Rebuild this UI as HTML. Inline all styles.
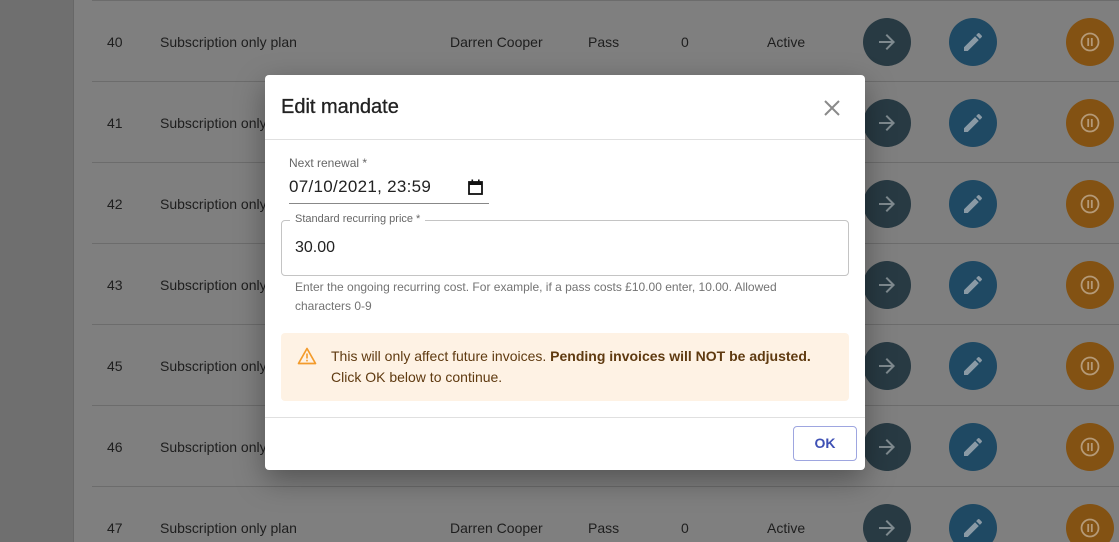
<!DOCTYPE html>
<html><head><meta charset="utf-8"><style>
*{margin:0;padding:0;box-sizing:border-box}
html,body{width:1119px;height:542px;overflow:hidden;background:#7f7f7f}
body{font-family:"Liberation Sans",sans-serif;position:relative}
.side{position:absolute;left:0;top:0;width:74px;height:542px;background:#6f6f6f;border-right:1px solid #676767}
.row{position:absolute;left:92px;right:0;height:81px;border-top:1px solid #6c6c6c;font-size:14px;color:#1e1e1e}
.row span{position:absolute;top:32px;line-height:18px}
.c{position:absolute;top:17px;width:48px;height:48px;border-radius:50%}
.c svg{position:absolute;left:12px;top:12px}
.a{left:771px;background:#283a43}
.e{left:857px;background:#1f4963}
.p{left:974px;background:#835213}
.modal{position:absolute;left:265px;top:75px;width:600px;height:395px;background:#fff;border-radius:4px;box-shadow:0 10px 30px rgba(0,0,0,.35)}
</style></head><body>
<div class="side"></div>

<div class="row" style="top:0"><span style="left:15px">40</span><span style="left:68px">Subscription only plan</span><span style="left:358px">Darren Cooper</span><span style="left:496px">Pass</span><span style="left:589px">0</span><span style="left:675px">Active</span>
<div class="c a"><svg width="24" height="24" viewBox="0 0 24 24"><path d="M12 4l-1.41 1.41L16.17 11H4v2h12.17l-5.58 5.59L12 20l8-8z" fill="#7f8a8f"/></svg></div>
<div class="c e"><svg width="24" height="24" viewBox="0 0 24 24"><path d="M3 17.25V21h3.75L17.81 9.94l-3.75-3.75L3 17.25zM20.71 7.04a1 1 0 000-1.41l-2.34-2.34a1 1 0 00-1.41 0l-1.83 1.83 3.750 3.75 1.83-1.83z" fill="#8a9aa5"/></svg></div>
<div class="c p"><svg width="24" height="24" viewBox="0 0 24 24"><circle cx="12" cy="12" r="8.5" fill="none" stroke="#b59a78" stroke-width="1.8"/><rect x="9.3" y="8" width="1.8" height="8" fill="#b59a78"/><rect x="12.9" y="8" width="1.8" height="8" fill="#b59a78"/></svg></div></div>

<div class="row" style="top:81px"><span style="left:15px">41</span><span style="left:68px">Subscription only plan</span>
<div class="c a"><svg width="24" height="24" viewBox="0 0 24 24"><path d="M12 4l-1.41 1.41L16.17 11H4v2h12.17l-5.58 5.59L12 20l8-8z" fill="#7f8a8f"/></svg></div>
<div class="c e"><svg width="24" height="24" viewBox="0 0 24 24"><path d="M3 17.25V21h3.75L17.81 9.94l-3.75-3.75L3 17.25zM20.71 7.04a1 1 0 000-1.41l-2.34-2.34a1 1 0 00-1.41 0l-1.83 1.83 3.75 3.75 1.83-1.83z" fill="#8a9aa5"/></svg></div>
<div class="c p"><svg width="24" height="24" viewBox="0 0 24 24"><circle cx="12" cy="12" r="8.5" fill="none" stroke="#b59a78" stroke-width="1.8"/><rect x="9.3" y="8" width="1.8" height="8" fill="#b59a78"/><rect x="12.9" y="8" width="1.8" height="8" fill="#b59a78"/></svg></div></div>

<div class="row" style="top:162px"><span style="left:15px">42</span><span style="left:68px">Subscription only plan</span>
<div class="c a"><svg width="24" height="24" viewBox="0 0 24 24"><path d="M12 4l-1.41 1.41L16.17 11H4v2h12.17l-5.58 5.59L12 20l8-8z" fill="#7f8a8f"/></svg></div>
<div class="c e"><svg width="24" height="24" viewBox="0 0 24 24"><path d="M3 17.25V21h3.75L17.81 9.94l-3.75-3.75L3 17.25zM20.71 7.04a1 1 0 000-1.41l-2.34-2.34a1 1 0 00-1.41 0l-1.83 1.83 3.75 3.75 1.83-1.83z" fill="#8a9aa5"/></svg></div>
<div class="c p"><svg width="24" height="24" viewBox="0 0 24 24"><circle cx="12" cy="12" r="8.5" fill="none" stroke="#b59a78" stroke-width="1.8"/><rect x="9.3" y="8" width="1.8" height="8" fill="#b59a78"/><rect x="12.9" y="8" width="1.8" height="8" fill="#b59a78"/></svg></div></div>

<div class="row" style="top:243px"><span style="left:15px">43</span><span style="left:68px">Subscription only plan</span>
<div class="c a"><svg width="24" height="24" viewBox="0 0 24 24"><path d="M12 4l-1.41 1.41L16.17 11H4v2h12.17l-5.58 5.59L12 20l8-8z" fill="#7f8a8f"/></svg></div>
<div class="c e"><svg width="24" height="24" viewBox="0 0 24 24"><path d="M3 17.25V21h3.75L17.81 9.94l-3.75-3.75L3 17.25zM20.71 7.04a1 1 0 000-1.41l-2.34-2.34a1 1 0 00-1.41 0l-1.83 1.83 3.75 3.75 1.83-1.83z" fill="#8a9aa5"/></svg></div>
<div class="c p"><svg width="24" height="24" viewBox="0 0 24 24"><circle cx="12" cy="12" r="8.5" fill="none" stroke="#b59a78" stroke-width="1.8"/><rect x="9.3" y="8" width="1.8" height="8" fill="#b59a78"/><rect x="12.9" y="8" width="1.8" height="8" fill="#b59a78"/></svg></div></div>

<div class="row" style="top:324px"><span style="left:15px">45</span><span style="left:68px">Subscription only plan</span>
<div class="c a"><svg width="24" height="24" viewBox="0 0 24 24"><path d="M12 4l-1.41 1.41L16.17 11H4v2h12.17l-5.58 5.59L12 20l8-8z" fill="#7f8a8f"/></svg></div>
<div class="c e"><svg width="24" height="24" viewBox="0 0 24 24"><path d="M3 17.25V21h3.75L17.81 9.94l-3.75-3.75L3 17.25zM20.71 7.04a1 1 0 000-1.41l-2.34-2.34a1 1 0 00-1.41 0l-1.83 1.83 3.75 3.75 1.83-1.83z" fill="#8a9aa5"/></svg></div>
<div class="c p"><svg width="24" height="24" viewBox="0 0 24 24"><circle cx="12" cy="12" r="8.5" fill="none" stroke="#b59a78" stroke-width="1.8"/><rect x="9.3" y="8" width="1.8" height="8" fill="#b59a78"/><rect x="12.9" y="8" width="1.8" height="8" fill="#b59a78"/></svg></div></div>

<div class="row" style="top:405px"><span style="left:15px">46</span><span style="left:68px">Subscription only plan</span>
<div class="c a"><svg width="24" height="24" viewBox="0 0 24 24"><path d="M12 4l-1.41 1.41L16.17 11H4v2h12.17l-5.58 5.59L12 20l8-8z" fill="#7f8a8f"/></svg></div>
<div class="c e"><svg width="24" height="24" viewBox="0 0 24 24"><path d="M3 17.25V21h3.75L17.81 9.94l-3.75-3.75L3 17.25zM20.71 7.04a1 1 0 000-1.41l-2.34-2.34a1 1 0 00-1.41 0l-1.83 1.83 3.75 3.75 1.83-1.83z" fill="#8a9aa5"/></svg></div>
<div class="c p"><svg width="24" height="24" viewBox="0 0 24 24"><circle cx="12" cy="12" r="8.5" fill="none" stroke="#b59a78" stroke-width="1.8"/><rect x="9.3" y="8" width="1.8" height="8" fill="#b59a78"/><rect x="12.9" y="8" width="1.8" height="8" fill="#b59a78"/></svg></div></div>

<div class="row" style="top:486px"><span style="left:15px">47</span><span style="left:68px">Subscription only plan</span><span style="left:358px">Darren Cooper</span><span style="left:496px">Pass</span><span style="left:589px">0</span><span style="left:675px">Active</span>
<div class="c a"><svg width="24" height="24" viewBox="0 0 24 24"><path d="M12 4l-1.41 1.41L16.17 11H4v2h12.17l-5.58 5.59L12 20l8-8z" fill="#7f8a8f"/></svg></div>
<div class="c e"><svg width="24" height="24" viewBox="0 0 24 24"><path d="M3 17.25V21h3.75L17.81 9.94l-3.75-3.75L3 17.25zM20.71 7.04a1 1 0 000-1.41l-2.34-2.34a1 1 0 00-1.41 0l-1.83 1.83 3.75 3.75 1.83-1.83z" fill="#8a9aa5"/></svg></div>
<div class="c p"><svg width="24" height="24" viewBox="0 0 24 24"><circle cx="12" cy="12" r="8.5" fill="none" stroke="#b59a78" stroke-width="1.8"/><rect x="9.3" y="8" width="1.8" height="8" fill="#b59a78"/><rect x="12.9" y="8" width="1.8" height="8" fill="#b59a78"/></svg></div></div>

<div class="modal">
  <div style="position:absolute;left:16px;top:20px;font-size:20px;color:#222;line-height:24px;-webkit-text-stroke:0.3px #222">Edit mandate</div>
  <svg style="position:absolute;left:558px;top:24px" width="18" height="18" viewBox="0 0 18 18"><path d="M2 2L16 16M16 2L2 16" stroke="#8a8a8a" stroke-width="2"/></svg>
  <div style="position:absolute;left:0;right:0;top:64px;border-top:1px solid #e0e0e0"></div>

  <div style="position:absolute;left:24px;top:81px;font-size:12px;color:#666">Next renewal *</div>
  <div style="position:absolute;left:24px;top:102px;font-size:17px;color:#222;letter-spacing:.3px">07/10/2021, 23:59</div>
  <svg style="position:absolute;left:202px;top:103px" width="18" height="18" viewBox="0 0 18 18"><rect x="2" y="4" width="13" height="12" fill="none" stroke="#111" stroke-width="1.8"/><rect x="2" y="4" width="13" height="3" fill="#111"/><rect x="4.5" y="1.5" width="1.6" height="3" fill="#111"/><rect x="11" y="1.5" width="1.6" height="3" fill="#111"/></svg>
  <div style="position:absolute;left:24px;top:128px;width:200px;border-top:1px solid #888"></div>

  <div style="position:absolute;left:16px;top:145px;width:568px;height:56px;border:1px solid #c4c4c4;border-radius:4px"></div>
  <div style="position:absolute;left:25px;top:138px;padding:0 5px;background:#fff;font-size:11px;color:#666">Standard recurring price *</div>
  <div style="position:absolute;left:30px;top:164px;font-size:16px;color:#222">30.00</div>
  <div style="position:absolute;left:30px;top:203px;width:500px;font-size:12px;color:#737373;line-height:19px">Enter the ongoing recurring cost. For example, if a pass costs £10.00 enter, 10.00. Allowed characters 0-9</div>

  <div style="position:absolute;left:16px;top:258px;width:568px;height:68px;background:#fef2e4;border-radius:4px">
    <svg style="position:absolute;left:16px;top:14px" width="20" height="18" viewBox="0 0 20 18"><path d="M10 1.5L18.5 16.5H1.5Z" fill="none" stroke="#f39b2b" stroke-width="1.7" stroke-linejoin="round"/><rect x="9.2" y="6.5" width="1.6" height="5" fill="#f39b2b"/><rect x="9.2" y="12.8" width="1.6" height="1.6" fill="#f39b2b"/></svg>
    <div style="position:absolute;left:50px;top:13px;font-size:14px;color:#5f3a10;line-height:21px">This will only affect future invoices. <b>Pending invoices will NOT be adjusted.</b><br>Click OK below to continue.</div>
  </div>

  <div style="position:absolute;left:0;right:0;top:342px;border-top:1px solid #e0e0e0"></div>
  <div style="position:absolute;left:528px;top:351px;width:64px;height:35px;border:1px solid #9ea6e0;border-radius:4px;color:#3f51b5;font-size:14px;font-weight:bold;text-align:center;line-height:33px">OK</div>
</div>
</body></html>
